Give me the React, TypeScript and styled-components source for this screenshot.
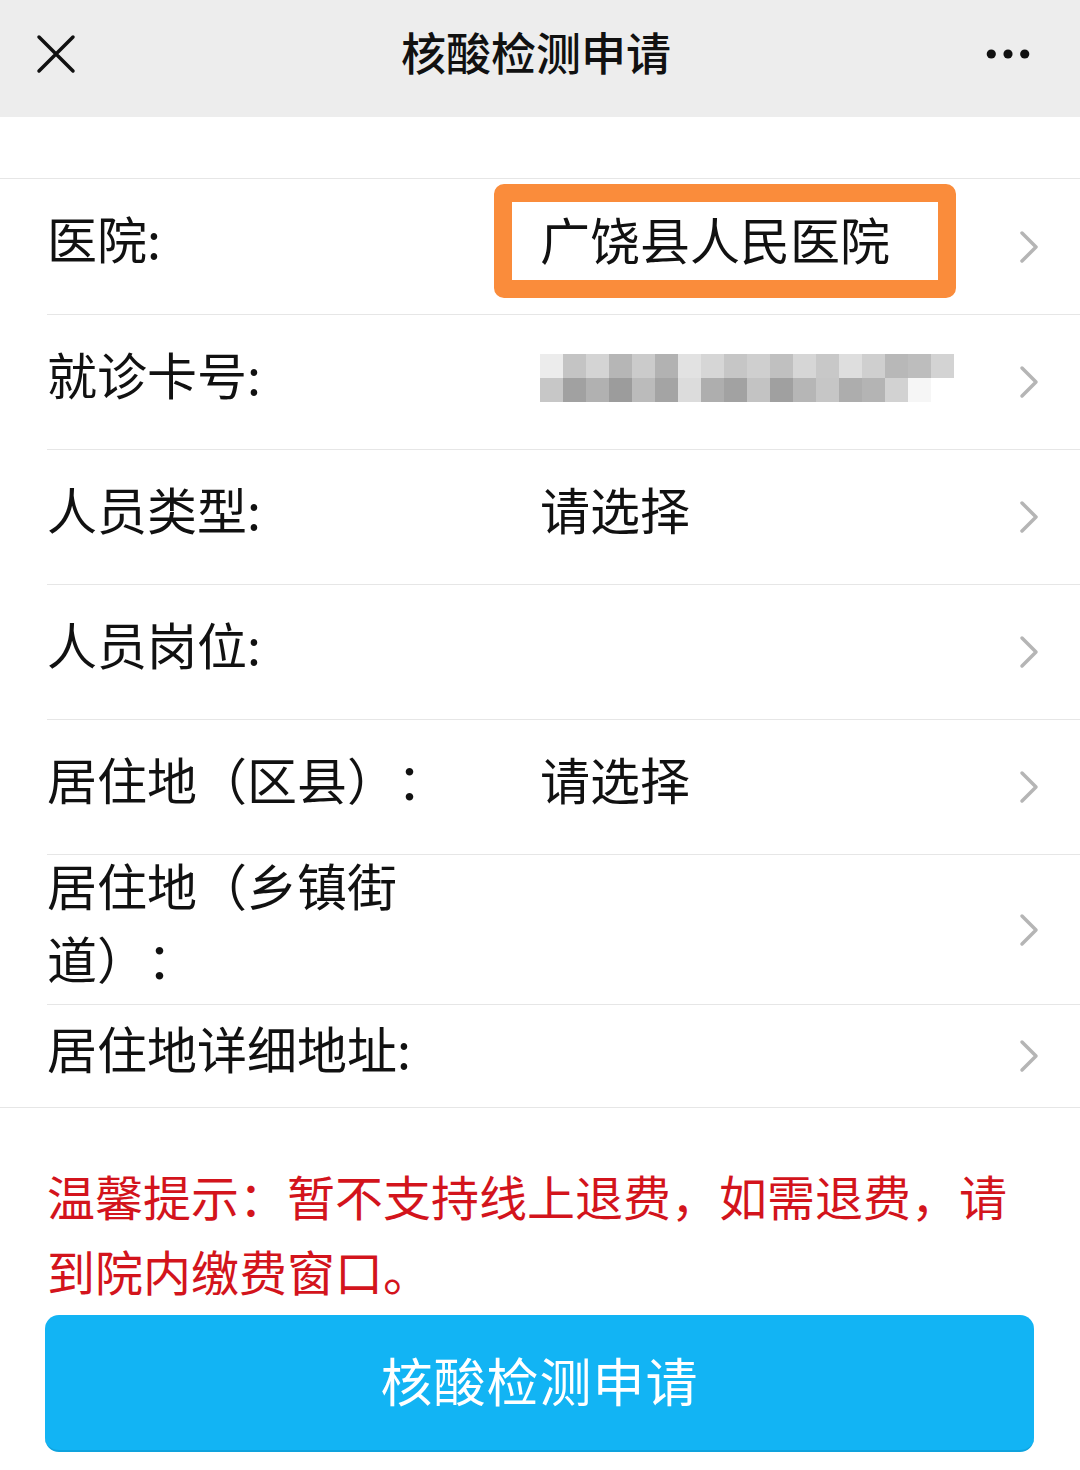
import styled, { createGlobalStyle } from 'styled-components'

const GlobalStyle = createGlobalStyle`
    * { box-sizing: border-box; }
    body {
        margin: 0;
        background: #fff;
        font-family: "Noto Sans CJK SC", "Noto Sans", sans-serif;
        color: #111;
        text-spacing-trim: space-all;
    }
`

const Page = styled.div`
    width: 1080px;
    min-height: 1470px;
    background: #fff;
`

const Header = styled.header`
    height: 117px;
    background: #ededed;
    display: flex;
    align-items: center;
    justify-content: space-between;
    padding: 0 50px 10px 34px;
`

const Title = styled.h1`
    margin: 0 0 4px;
    font-size: 45px;
    font-weight: 500;
    color: #111;
    flex: 1;
    text-align: center;
    padding-left: 8px;
`

const IconBox = styled.div`
    width: 44px;
    height: 44px;
    display: flex;
    align-items: center;
    justify-content: center;
`

const Spacer = styled.div`
    height: 61px;
`

const List = styled.section`
    border-top: 1px solid #e6e6e6;
    border-bottom: 1px solid #e6e6e6;
`

const Row = styled.div<{ $h: number }>`
    margin-left: 47px;
    min-height: ${p => p.$h}px;
    display: flex;
    align-items: center;
    padding-right: 40px;

    & + & {
        border-top: 1px solid #e6e6e6;
    }
`

const Label = styled.div`
    width: 447px;
    font-size: 50px;
    line-height: 73px;
    color: #111;
    padding-right: 20px;
    margin-top: -18px;
`

const ValueCell = styled.div`
    flex: 1;
    display: flex;
    align-items: center;
    font-size: 50px;
    color: #111;
    margin-top: -18px;
`

const PlainValue = styled.span`
    padding-left: 46px;
    line-height: 73px;
`

const Highlight = styled.div`
    width: 462px;
    height: 114px;
    border: 18px solid #fa8c3b;
    border-radius: 10px;
    padding: 0 0 6px 28px;
    display: flex;
    align-items: center;
    font-size: 50px;
    margin-top: 6px;
`

const Mosaic = styled.div`
    margin: 10px 0 0 46px;
    display: grid;
    grid-template-columns: repeat(18, 23px);
    grid-auto-rows: 24px;
`

const Cell = styled.span<{ $c: string }>`
    background: ${p => p.$c};
`

const Chevron = styled.div`
    width: 22px;
    display: flex;
    justify-content: center;
`

const Notice = styled.p`
    margin: 50px 0 0;
    padding: 0 46px 0 47px;
    font-size: 48px;
    line-height: 75px;
    color: #d3141c;
`

const SubmitButton = styled.button`
    display: flex;
    align-items: center;
    justify-content: center;
    margin: 7px 0 0 45px;
    width: 989px;
    height: 137px;
    border: none;
    border-bottom: 2px solid #0ea3de;
    border-radius: 14px;
    background: #12b4f4;
    color: #fff;
    font-family: inherit;
    font-size: 52px;
    letter-spacing: 1px;
    padding-bottom: 8px;
`

const mosaic = [
    '#ececec', '#c4c4c4', '#d4d4d4', '#b6b6b6', '#cbcbcb', '#b2b2b2', '#e2e2e2', '#d6d6d6', '#c6c6c6',
    '#cfcfcf', '#c0c0c0', '#d6d6d6', '#c8c8c8', '#dedede', '#cfcfcf', '#b8b8b8', '#bdbdbd', '#d3d3d3',
    '#c7c7c7', '#a1a1a1', '#b1b1b1', '#9c9c9c', '#bbbbbb', '#a4a4a4', '#dcdcdc', '#aeaeae', '#a2a2a2',
    '#c3c3c3', '#a0a0a0', '#b6b6b6', '#c6c6c6', '#adadad', '#b4b4b4', '#d2d2d2', '#f6f6f6', '#fff',
]

const ChevronIcon = () => (
    <Chevron>
        <svg width="20" height="34" viewBox="0 0 20 34">
            <path d="M3 3 L17 17 L3 31" fill="none" stroke="#b5b5b5" strokeWidth="3.5" strokeLinecap="round" strokeLinejoin="round" />
        </svg>
    </Chevron>
)

const rows: { label: string; value?: string; h: number }[] = [
    { label: '就诊卡号:', h: 135 },
    { label: '人员类型:', value: '请选择', h: 135 },
    { label: '人员岗位:', h: 135 },
    { label: '居住地（区县）：', value: '请选择', h: 135 },
    { label: '居住地（乡镇街道）：', h: 150 },
    { label: '居住地详细地址:', h: 103 },
]

export default function App() {
    return (
        <Page>
            <GlobalStyle />
            <Header>
                <IconBox>
                    <svg width="40" height="40" viewBox="0 0 40 40">
                        <path d="M3 3 L37 37 M37 3 L3 37" stroke="#111" strokeWidth="3.5" strokeLinecap="round" />
                    </svg>
                </IconBox>
                <Title>核酸检测申请</Title>
                <IconBox>
                    <svg width="50" height="12" viewBox="0 0 50 12">
                        <circle cx="6" cy="6" r="5.2" fill="#111" />
                        <circle cx="25" cy="6" r="5.2" fill="#111" />
                        <circle cx="44" cy="6" r="5.2" fill="#111" />
                    </svg>
                </IconBox>
            </Header>
            <Spacer />
            <List>
                <Row $h={135}>
                    <Label>医院:</Label>
                    <ValueCell>
                        <Highlight>广饶县人民医院</Highlight>
                    </ValueCell>
                    <ChevronIcon />
                </Row>
                {rows.map((r, i) => (
                    <Row $h={r.h} key={r.label}>
                        <Label>{r.label}</Label>
                        <ValueCell>
                            {i === 0 ? (
                                <Mosaic>
                                    {mosaic.map((c, j) => <Cell key={j} $c={c} />)}
                                </Mosaic>
                            ) : r.value ? (
                                <PlainValue>{r.value}</PlainValue>
                            ) : null}
                        </ValueCell>
                        <ChevronIcon />
                    </Row>
                ))}
            </List>
            <Notice>温馨提示：暂不支持线上退费，如需退费，请到院内缴费窗口。</Notice>
            <SubmitButton>核酸检测申请</SubmitButton>
        </Page>
    )
}
